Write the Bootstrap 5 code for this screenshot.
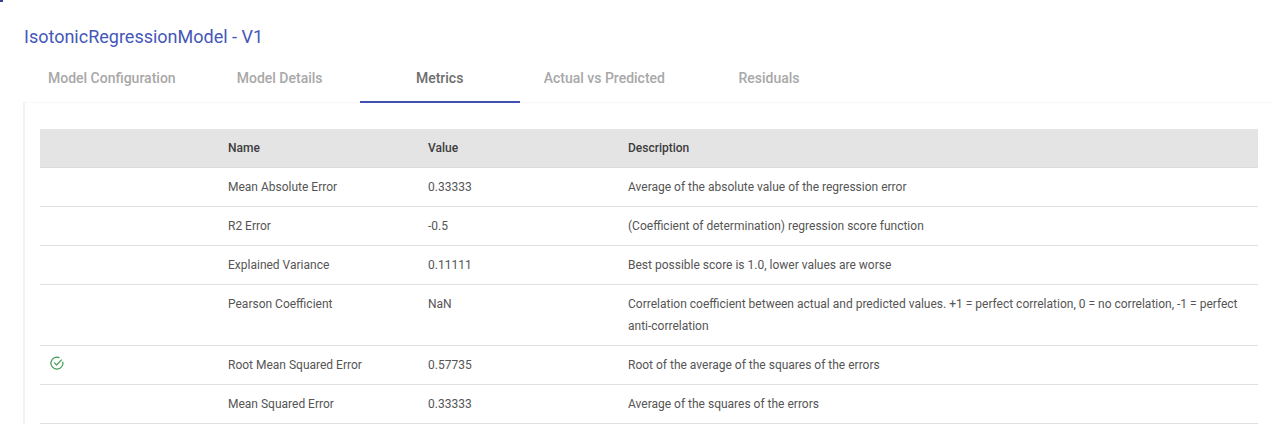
<!DOCTYPE html>
<html lang="en">
<head>
  <meta charset="UTF-8" />
  <meta name="viewport" content="width=device-width, initial-scale=1" />
  <title>IsotonicRegressionModel - V1</title>
  <link rel="stylesheet" href="https://cdn.jsdelivr.net/npm/bootstrap@5.3.0/dist/css/bootstrap.min.css" />
  <style>
    html, body {
      height: 100%;
      overflow: hidden;
    }
    body {
      background: #fff;
      font-family: Roboto, sans-serif;
      color: #444;
    }
    .model-page {
      padding: 25px 0 0 24px;
    }
    .model-title {
      font-size: 18px;
      font-weight: 400;
      line-height: 24px;
      color: #4557b9;
      margin: 0 0 6px;
    }
    .model-tabs {
      position: relative;
      z-index: 1;
    }
    .model-tabs .nav-link {
      height: 48px;
      min-width: 160px;
      padding: 0 24px 2px;
      border: 0;
      border-radius: 0;
      font-size: 14px;
      font-weight: 500;
      color: #a8a8a8;
      display: flex;
      align-items: center;
      justify-content: center;
    }
    .model-tabs .nav-link.active {
      color: #6e6e6e;
      box-shadow: inset 0 -2px 0 #3f51b5;
    }
    .metrics-panel {
      margin: -1px 0 0 -1px;
      padding: 26px 13px 0 15px;
      border-left: 2px solid #f2f2f2;
      border-top: 1px solid #f7f7f7;
    }
    .metrics-table {
      font-size: 12px;
      table-layout: fixed;
      margin: 0;
    }
    .metrics-table th, .metrics-table td {
      padding: 8px 12px;
      line-height: 22px;
      border-bottom: 1px solid #e0e0e0;
      color: #555;
      background: transparent;
      box-shadow: none;
    }
    .metrics-table thead th {
      background: #e4e4e4;
      font-weight: 500;
      color: #3d3d3d;
      border-bottom: 1px solid #dcdcdc;
    }
    .col-flag { width: 176px; }
    .col-name, .col-value { width: 200px; }
    .flag-icon { display: block; margin: 2px 0 0 -2px; }
    .corner-mark {
      position: absolute;
      top: 0;
      left: 0;
      width: 3px;
      height: 2px;
      background: #3b3f8f;
    }
  </style>
</head>
<body>
<span class="corner-mark"></span>
<div class="model-page">
  <h1 class="model-title">IsotonicRegressionModel - V1</h1>
  <ul class="nav model-tabs">
    <li class="nav-item"><a class="nav-link" href="#">Model Configuration</a></li>
    <li class="nav-item"><a class="nav-link" href="#">Model Details</a></li>
    <li class="nav-item"><a class="nav-link active" href="#">Metrics</a></li>
    <li class="nav-item"><a class="nav-link" href="#">Actual vs Predicted</a></li>
    <li class="nav-item"><a class="nav-link" href="#">Residuals</a></li>
  </ul>
  <div class="metrics-panel">
    <table class="table metrics-table">
      <colgroup><col class="col-flag"><col class="col-name"><col class="col-value"><col></colgroup>
      <thead>
        <tr><th></th><th>Name</th><th>Value</th><th>Description</th></tr>
      </thead>
      <tbody>
        <tr><td></td><td>Mean Absolute Error</td><td>0.33333</td><td>Average of the absolute value of the regression error</td></tr>
        <tr><td></td><td>R2 Error</td><td>-0.5</td><td>(Coefficient of determination) regression score function</td></tr>
        <tr><td></td><td>Explained Variance</td><td>0.11111</td><td>Best possible score is 1.0, lower values are worse</td></tr>
        <tr><td></td><td>Pearson Coefficient</td><td>NaN</td><td>Correlation coefficient between actual and predicted values. +1 = perfect correlation, 0 = no correlation, -1 = perfect anti-correlation</td></tr>
        <tr>
          <td>
            <svg class="flag-icon" width="14" height="14" viewBox="0 0 14 14" fill="none" stroke="#3f9b4f" stroke-width="1.2">
              <path d="M12.7 5.6A6 6 0 1 1 9.6 1.8"/>
              <path d="M4.2 6.6 6.6 9 11.8 3.6"/>
            </svg>
          </td>
          <td>Root Mean Squared Error</td><td>0.57735</td><td>Root of the average of the squares of the errors</td>
        </tr>
        <tr><td></td><td>Mean Squared Error</td><td>0.33333</td><td>Average of the squares of the errors</td></tr>
      </tbody>
    </table>
  </div>
</div>
<script src="https://cdn.jsdelivr.net/npm/bootstrap@5.3.0/dist/js/bootstrap.bundle.min.js"></script>
</body>
</html>
